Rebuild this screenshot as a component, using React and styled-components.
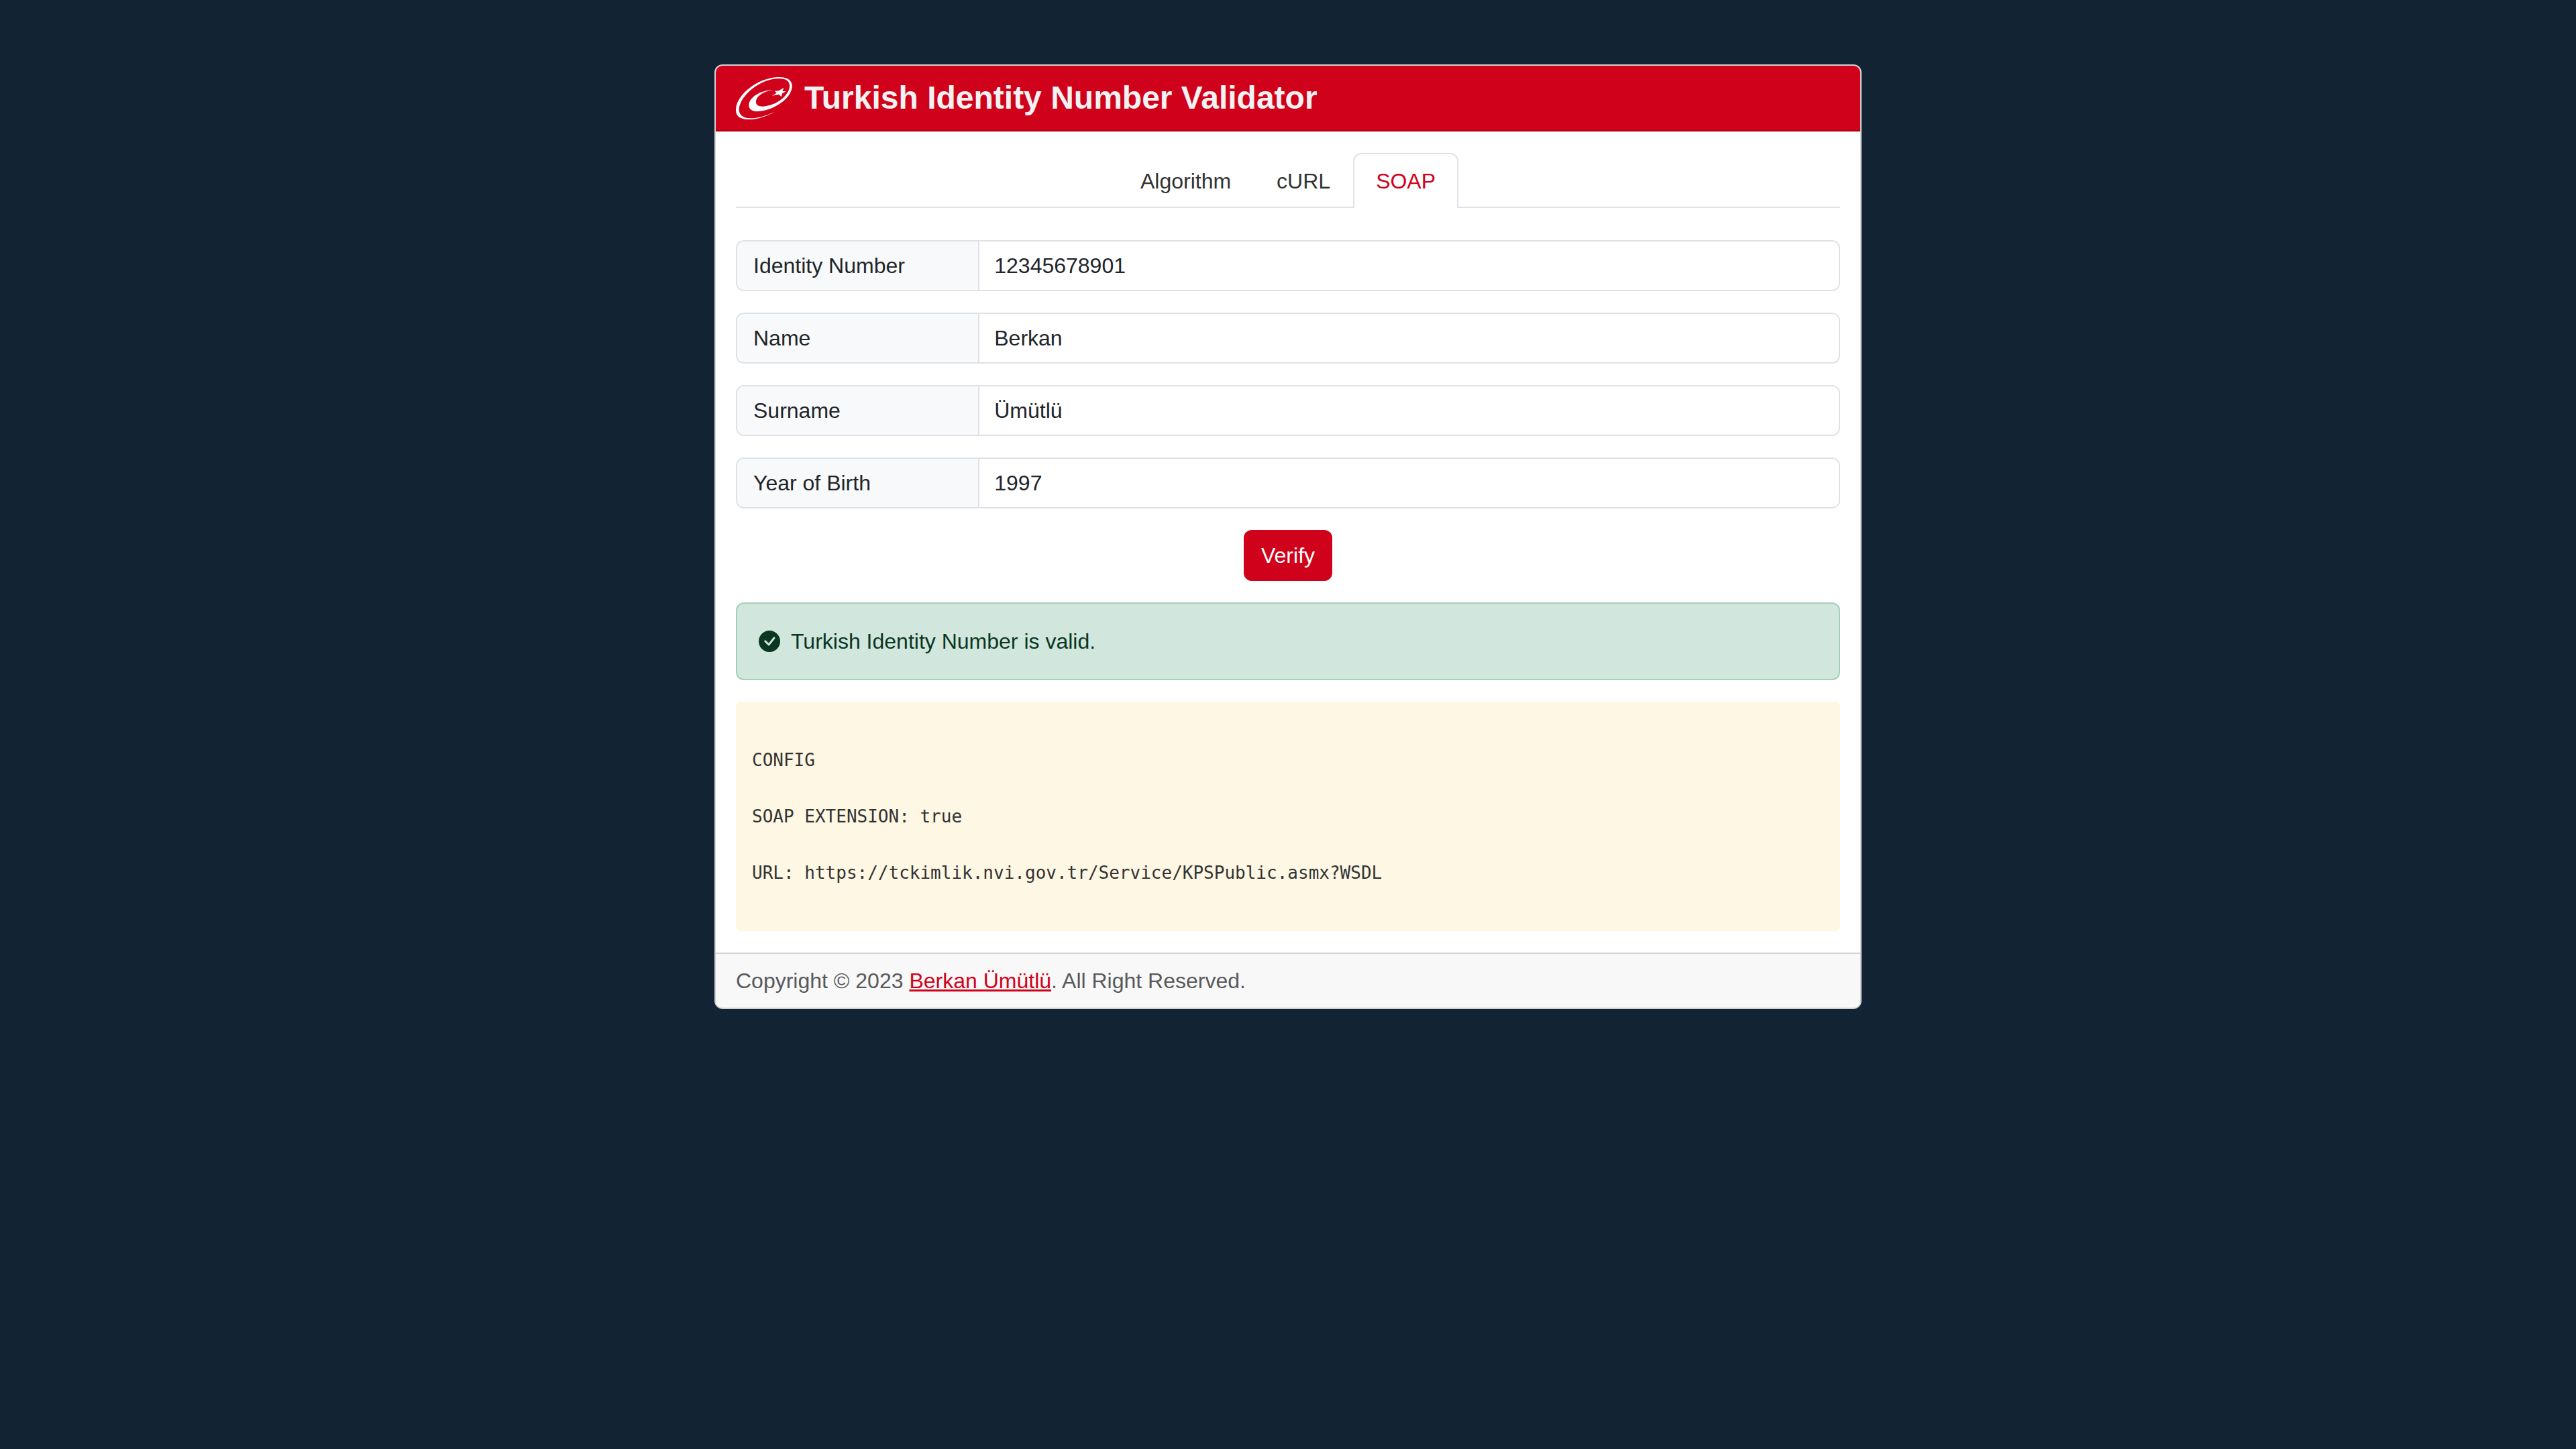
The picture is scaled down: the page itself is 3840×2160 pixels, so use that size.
import React, { useId, useState } from "react";
import styled, { createGlobalStyle } from "styled-components";
import { BsCheckCircleFill } from "react-icons/bs";

const colors = {
  page: "#122433",
  red: "#d0021b",
  text: "#212529",
  line: "#dee2e6",
  cardLine: "#d2d2d2",
};

const GlobalStyle = createGlobalStyle`
  *, *::before, *::after { box-sizing: border-box; }
  body {
    margin: 0;
    background: ${colors.page};
    color: ${colors.text};
    font-family: "Liberation Sans", Arial, sans-serif;
    font-size: 32px;
    line-height: 48px;
  }
`;

const Page = styled.div`
  padding: 96px 32px;
`;

const Card = styled.main`
  max-width: 1710px;
  margin: 0 auto;
  background: #fff;
  border: 2px solid ${colors.cardLine};
  border-radius: 12px;
  overflow: hidden;
`;

const Header = styled.header`
  display: flex;
  align-items: center;
  gap: 18px;
  padding: 16px 30px;
  background: ${colors.red};
  border-bottom: 2px solid #ab0016;
`;

const Logo = styled.svg`
  flex: none;
  width: 84px;
  height: 64px;
  fill: #fff;
`;

const Title = styled.h1`
  margin: 0;
  color: #f2f2f2;
  font-size: 48px;
  line-height: 58px;
  font-weight: 700;
`;

const Body = styled.div`
  display: flex;
  flex-direction: column;
  gap: 32px;
  padding: 32px 30px;
`;

const Tabs = styled.nav`
  display: flex;
  justify-content: center;
  margin-bottom: 16px;
  box-shadow: inset 0 -2px ${colors.line};
`;

const Tab = styled.a`
  padding: 16px 32px;
  border: 2px solid ${(p) => (p.$active ? colors.line : "transparent")};
  border-bottom: 0;
  border-radius: 12px 12px 0 0;
  background: ${(p) => (p.$active ? "#fff" : "transparent")};
  color: ${(p) => (p.$active ? colors.red : "#333")};
  text-decoration: none;
`;

const Form = styled.form`
  display: flex;
  flex-direction: column;
  gap: 32px;
`;

const Group = styled.div`
  display: flex;
  border: 2px solid ${colors.line};
  border-radius: 12px;
  overflow: hidden;
`;

const Label = styled.label`
  flex: 0 0 22%;
  padding: 12px 24px;
  background: #f8f9fa;
  border-right: 2px solid ${colors.line};
`;

const Input = styled.input`
  flex: 1;
  min-width: 0;
  padding: 12px 22px;
  border: 0;
  outline: 0;
  background: #fff;
  color: inherit;
  font: inherit;
`;

const Button = styled.button`
  align-self: center;
  padding: 14px 26px;
  border: 0;
  border-radius: 12px;
  background: ${colors.red};
  color: #fff;
  font: inherit;
  cursor: pointer;
`;

const Alert = styled.div`
  display: flex;
  align-items: center;
  gap: 16px;
  padding: 32px;
  border: 2px solid #a3cfbb;
  border-radius: 12px;
  background: #d1e7dd;
  color: #0a3622;

  svg {
    flex: none;
    width: 32px;
    height: 32px;
  }
`;

const Output = styled.pre`
  margin: 0;
  padding: 24px;
  border-radius: 8px;
  background: #fdf7e3;
  color: #333;
  font-family: Consolas, "DejaVu Sans Mono", monospace;
  font-size: 26px;
  line-height: 42px;
  white-space: pre-wrap;
`;

const Footer = styled.footer`
  padding: 16px 30px;
  border-top: 2px solid ${colors.cardLine};
  background: #f8f8f8;
  color: #58595c;
`;

const FooterLink = styled.a`
  color: ${colors.red};
`;

const CONFIG = `
CONFIG

SOAP EXTENSION: true

URL: https://tckimlik.nvi.gov.tr/Service/KPSPublic.asmx?WSDL

`;

const TABS = ["Algorithm", "cURL", "SOAP"];

const FIELDS = [
  { label: "Identity Number", value: "12345678901" },
  { label: "Name", value: "Berkan" },
  { label: "Surname", value: "Ümütlü" },
  { label: "Year of Birth", value: "1997" },
];

function CrescentLogo() {
  return (
    <Logo viewBox="126 84 252 192" aria-hidden="true">
      <path d="M298 242C262 264 215 277 180 276C145 275 125 262 126 232C128 165 225 88 318 87C358 86 380 103 377 132C372 185 290 240 218 240C198 239 184 230 184 212C185 178 235 145 292 145C250 150 216 172 216 198C216 212 228 219 248 218C305 215 362 172 366 130C368 105 350 93 318 93C235 94 145 168 140 230C139 256 158 271 190 271C225 271 262 259 298 242Z" />
      <path d="M299 149L318 148L340 134L334 149L350 151L334 159L329 174L317 164L287 170L308 158Z" />
    </Logo>
  );
}

function Field({ label, value }) {
  const id = useId();
  const [text, setText] = useState(value);
  return (
    <Group>
      <Label htmlFor={id}>{label}</Label>
      <Input id={id} value={text} onChange={(e) => setText(e.target.value)} />
    </Group>
  );
}

export default function App() {
  const [active, setActive] = useState("SOAP");
  return (
    <>
      <GlobalStyle />
      <Page>
        <Card>
          <Header>
            <CrescentLogo />
            <Title>Turkish Identity Number Validator</Title>
          </Header>
          <Body>
            <Tabs>
              {TABS.map((name) => (
                <Tab
                  key={name}
                  href={`#${name.toLowerCase()}`}
                  $active={name === active}
                  aria-current={name === active ? "page" : undefined}
                  onClick={() => setActive(name)}
                >
                  {name}
                </Tab>
              ))}
            </Tabs>
            <Form onSubmit={(e) => e.preventDefault()}>
              {FIELDS.map((field) => (
                <Field key={field.label} {...field} />
              ))}
              <Button type="submit">Verify</Button>
            </Form>
            <Alert role="status">
              <BsCheckCircleFill aria-hidden="true" />
              <span>Turkish Identity Number is valid.</span>
            </Alert>
            <Output>{CONFIG}</Output>
          </Body>
          <Footer>
            Copyright © 2023 <FooterLink href="#author">Berkan Ümütlü</FooterLink>. All Right Reserved.
          </Footer>
        </Card>
      </Page>
    </>
  );
}
